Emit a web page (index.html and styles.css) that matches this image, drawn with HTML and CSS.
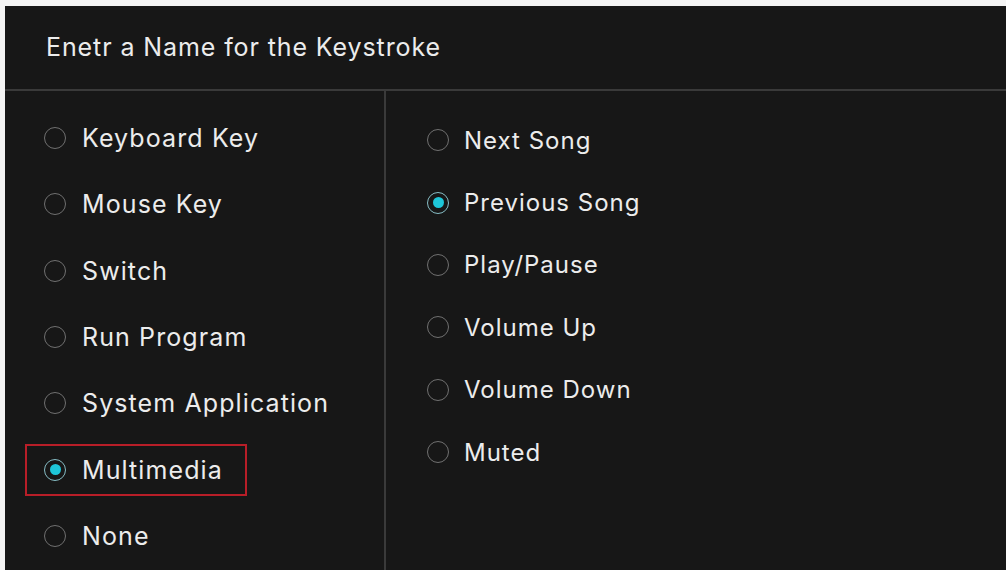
FILE: index.html
```html
<!DOCTYPE html>
<html>
<head>
<meta charset="utf-8">
<link rel="stylesheet" href="styles.css">
</head>
<body>
<div class="panel">
  <div class="header">Enetr a Name for the Keystroke</div>
  <div class="body">
    <div class="col left">
      <div class="opt"><span class="radio"></span><span class="lbl">Keyboard Key</span></div>
      <div class="opt"><span class="radio"></span><span class="lbl">Mouse Key</span></div>
      <div class="opt"><span class="radio"></span><span class="lbl">Switch</span></div>
      <div class="opt"><span class="radio"></span><span class="lbl">Run Program</span></div>
      <div class="opt"><span class="radio"></span><span class="lbl">System Application</span></div>
      <div class="opt highlight"><span class="radio on"></span><span class="lbl">Multimedia</span></div>
      <div class="opt"><span class="radio"></span><span class="lbl">None</span></div>
    </div>
    <div class="col right">
      <div class="opt"><span class="radio"></span><span class="lbl">Next Song</span></div>
      <div class="opt"><span class="radio on"></span><span class="lbl">Previous Song</span></div>
      <div class="opt"><span class="radio"></span><span class="lbl">Play/Pause</span></div>
      <div class="opt"><span class="radio"></span><span class="lbl">Volume Up</span></div>
      <div class="opt"><span class="radio"></span><span class="lbl">Volume Down</span></div>
      <div class="opt"><span class="radio"></span><span class="lbl">Muted</span></div>
    </div>
  </div>
</div>
</body>
</html>
```
FILE: styles.css
```css
html, body {
  margin: 0;
  padding: 0;
  background: #f4f4f4;
  width: 1006px;
  height: 570px;
  overflow: hidden;
}
.panel {
  margin: 6px 0 0 5px;
  height: 564px;
  background: #171717;
  display: flex;
  flex-direction: column;
  font-family: Inter, Roboto, "Liberation Sans", sans-serif;
  color: #ececec;
}
.header {
  height: 85px;
  box-sizing: border-box;
  padding-left: 41px;
  padding-bottom: 2px;
  display: flex;
  align-items: center;
  font-size: 25px;
  letter-spacing: 0.9px;
  border-bottom: 2px solid #3a3a3a;
}
.body {
  flex: 1;
  display: flex;
}
.col {
  display: flex;
  flex-direction: column;
}
.left {
  width: 381px;
  border-right: 2px solid #3a3a3a;
  padding-top: 14px;
  padding-left: 20px;
  box-sizing: border-box;
}
.right {
  padding-top: 18px;
  padding-left: 41px;
}
.opt {
  display: flex;
  align-items: center;
  font-size: 25px;
  letter-spacing: 1.1px;
  white-space: nowrap;
}
.left .opt {
  height: 52px;
  margin: 7.15px 0;
  width: 222px;
  box-sizing: border-box;
  padding-left: 17px;
  border: 2px solid transparent;
}
.left .opt.highlight {
  border-color: #b81e28;
}
.right .opt {
  height: 62.4px;
  font-size: 24px;
  letter-spacing: 1px;
}
.right .radio {
  margin-right: 15px;
}
.radio {
  width: 22px;
  height: 22px;
  border-radius: 50%;
  border: 1.5px solid #707070;
  box-sizing: border-box;
  margin-right: 16px;
  flex-shrink: 0;
  display: flex;
  align-items: center;
  justify-content: center;
}
.radio.on {
  border-color: #86bcc4;
}
.radio.on::after {
  content: "";
  width: 11px;
  height: 11px;
  border-radius: 50%;
  background: #1ec6d8;
}
```
